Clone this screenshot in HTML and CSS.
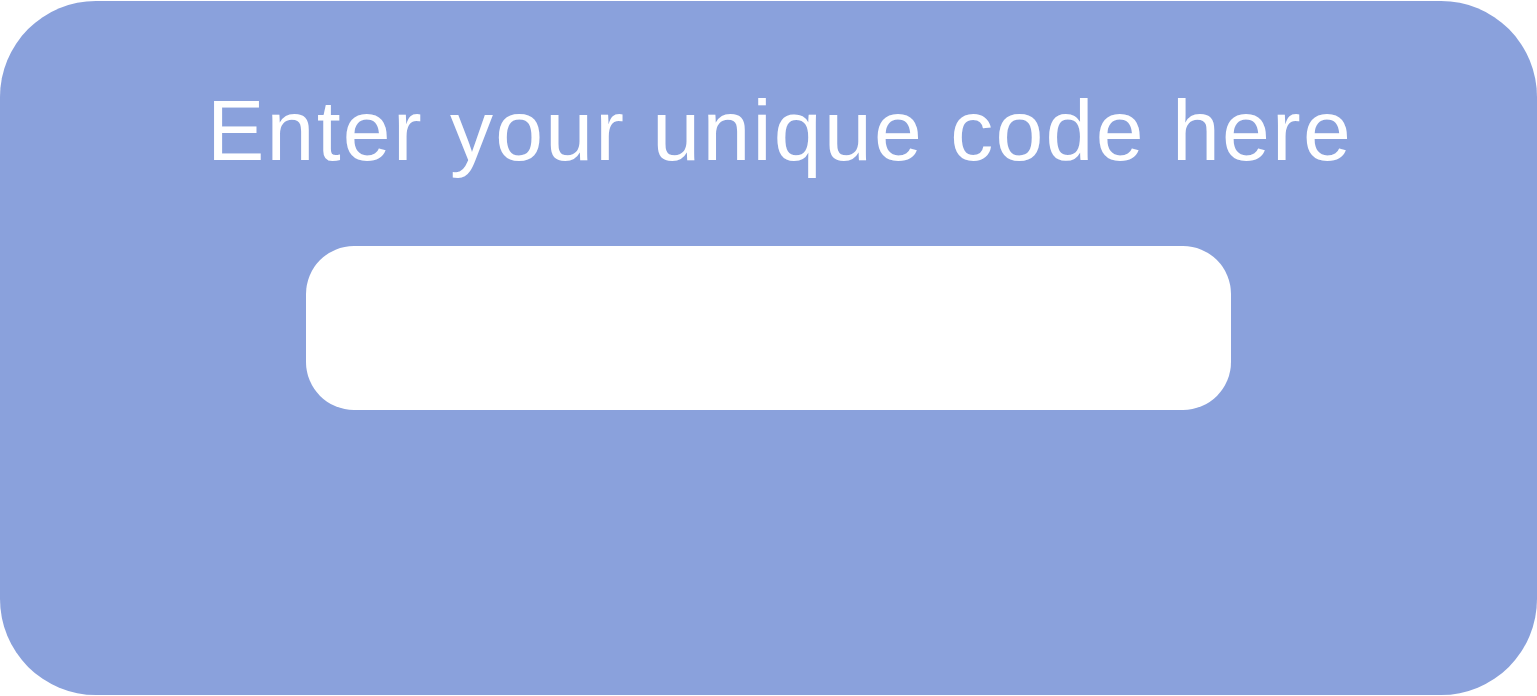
FILE: index.html
```html
<!DOCTYPE html>
<html lang="en">
<head>
<meta charset="utf-8">
<title>Enter code</title>
<link rel="stylesheet" href="styles.css">
</head>
<body>
<main class="card">
  <h1 class="title">Enter your unique code here</h1>
  <input class="code-input" type="text" aria-label="Unique code">
</main>
</body>
</html>
```
FILE: styles.css
```css
html, body {
  margin: 0;
  padding: 0;
  background: #ffffff;
  overflow: hidden;
}
.card {
  box-sizing: border-box;
  width: 1537px;
  height: 694px;
  margin-top: 1px;
  background: #8aa1dc;
  border-radius: 96px;
  display: flex;
  flex-direction: column;
  align-items: center;
  padding-top: 86px;
}
.title {
  margin: 0 0 73px 0;
  padding-left: 23px;
  font-family: "Liberation Sans", Arial, sans-serif;
  font-weight: 400;
  font-size: 86px;
  line-height: 86px;
  letter-spacing: 2.25px;
  color: #ffffff;
  white-space: nowrap;
}
.code-input {
  box-sizing: border-box;
  width: 925px;
  height: 164px;
  border: none;
  outline: none;
  border-radius: 48px;
  background: #ffffff;
  padding: 0 48px;
  font-family: "Liberation Sans", Arial, sans-serif;
  font-size: 48px;
}
```
